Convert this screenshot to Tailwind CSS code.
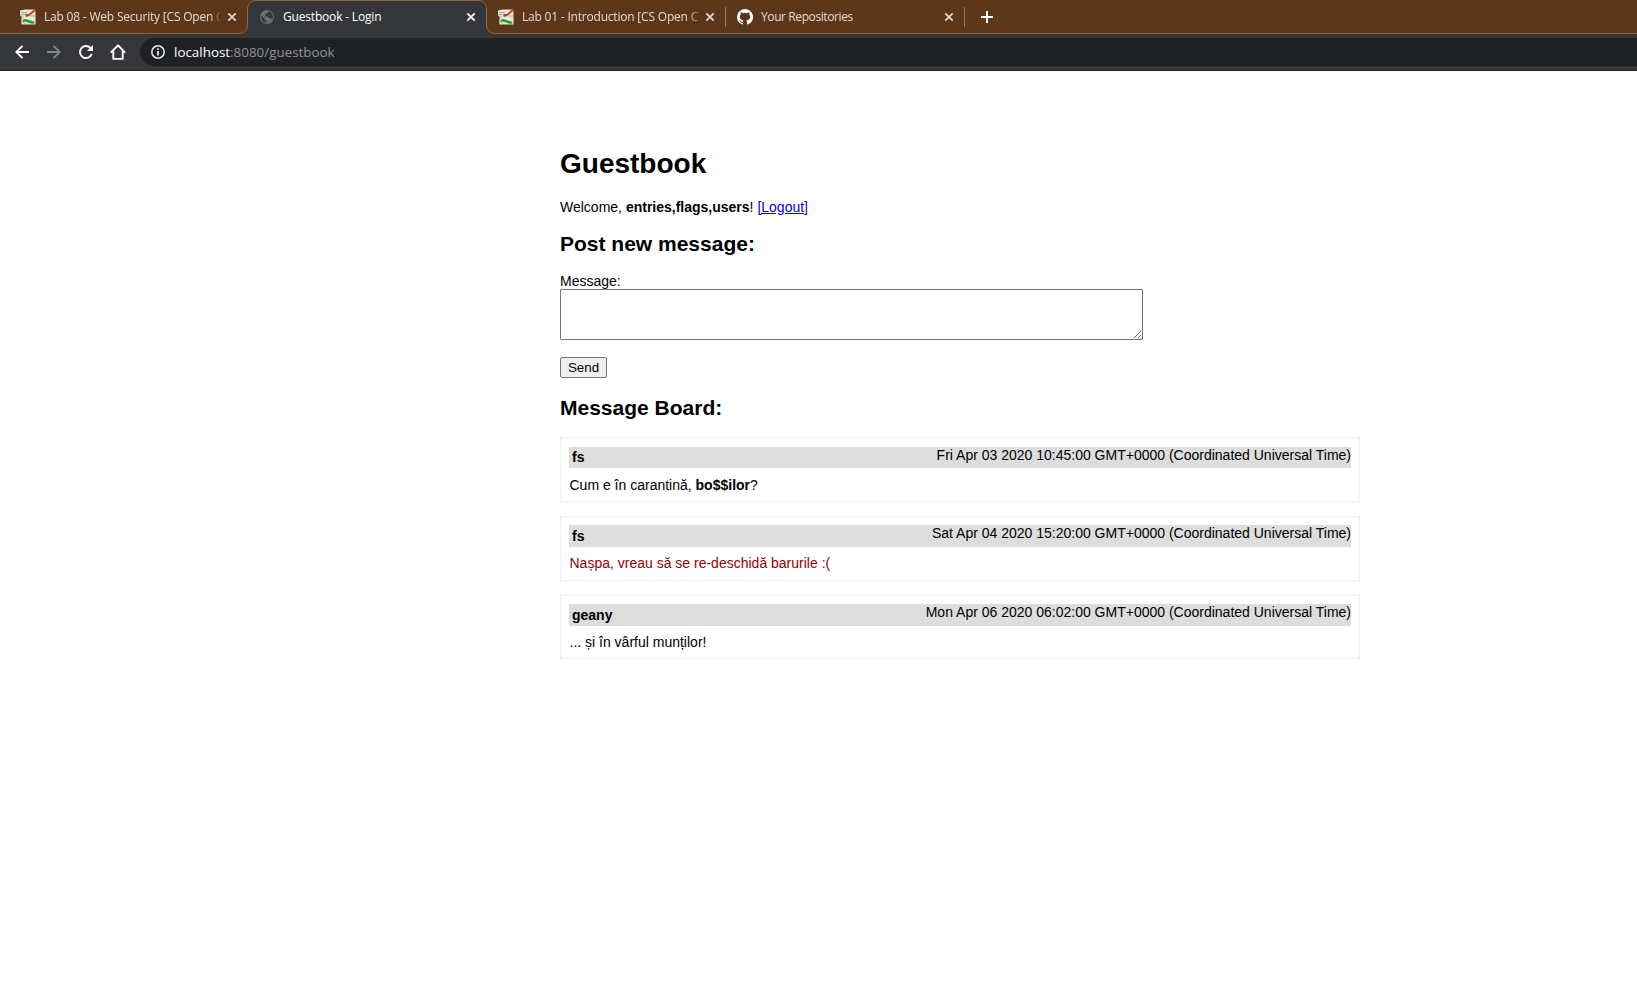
<!DOCTYPE html>
<html lang="ro">
<head>
<meta charset="utf-8">
<title>Guestbook - Login</title>
<script src="https://cdn.jsdelivr.net/npm/@tailwindcss/browser@4"></script>
</head>
<body class="bg-white text-black overflow-hidden">
<svg width="0" height="0" class="absolute">
  <defs>
    <symbol id="wiki" viewBox="0 0 16 16">
      <path d="M0 1.5 5 .500l9 0 1.500 2v13H1.500L2 9 0 6z" fill="#e9e4d8"/>
      <path d="M1 3.500h6M1 5.500h4M2 12l3 3M11 7h4M1 8h3M1.500 9.500v5" stroke="#b3a698" fill="none"/>
      <path d="M15.500.5 9 6 5.500 7" stroke="#c8452c" stroke-width="2" fill="none"/>
      <path d="M5.500 5 9 6.500" stroke="#8d4a35" stroke-width="1" fill="none"/>
      <path d="M4 11.500C7 10.500 9 13.500 13 13.500" stroke="#25a32c" stroke-width="2.600" fill="none" stroke-linecap="round"/>
      <path d="M4 9 14 11" stroke="#f7f7f2" fill="none"/>
    </symbol>
    <symbol id="close" viewBox="0 0 10 10"><path d="M1.300 1.300l7.400 7.400M8.700 1.300 1.300 8.700" stroke="currentColor" stroke-width="1.700" fill="none"/></symbol>
  </defs>
</svg>
<header class="font-['Open_Sans',sans-serif] text-[12px]">
  <div class="relative flex h-[34px] bg-[#5c3719] text-[#e3dbd4]">
    <svg class="absolute left-0 top-0" width="1637" height="34" fill="none">
      <path d="M240 34c5 0 8-3 8-8V9c0-5 3-8 8-8h222c5 0 8 3 8 8v17c0 5 3 8 8 8z" fill="#35363a"/>
      <path d="M0 33.500h239c5 0 8.500-3.500 8.500-8.500V9c0-5 3.500-8.500 8.500-8.500h222c5 0 8.500 3.500 8.500 8.500v16c0 5 3.500 8.500 8.500 8.500h1142" stroke="#85684f"/>
    </svg>
    <div class="relative flex h-[34px] w-[248px] items-center pl-5">
      <svg class="size-4"><use href="#wiki"/></svg>
      <span class="ml-2 w-[183px] whitespace-nowrap tracking-[-0.2px] mask-r-from-91% mask-r-to-97%">Lab 08 - Web Security [CS Open C</span>
      <svg class="size-[10px]"><use href="#close"/></svg>
    </div>
    <div class="relative flex h-[34px] w-[239px] items-center pl-3 text-white">
      <svg class="size-[14px]" viewBox="0 0 14 14"><circle cx="7" cy="7" r="7" fill="#6b6e73"/><path d="M1 5.500 4.500 8.500v1.300l1.800 1.200v1.700C3 12.500.8 9 1 5.500zM8 1.300v1.500L5.500 4v1.500L4.200 6.500h3.600l1 1.700h1.800l1.600 1.600c2-3.400.3-7.700-4.200-8.500z" fill="#35363a"/></svg>
      <span class="ml-[9px] w-[183px] whitespace-nowrap tracking-[-0.18px]">Guestbook - Login</span>
      <svg class="size-[10px]"><use href="#close"/></svg>
    </div>
    <div class="relative flex h-[34px] w-[239px] items-center pl-[11px]">
      <svg class="size-4"><use href="#wiki"/></svg>
      <span class="ml-2 w-[183px] whitespace-nowrap tracking-[-0.2px] mask-r-from-91% mask-r-to-99%">Lab 01 - Introduction [CS Open C</span>
      <svg class="size-[10px]"><use href="#close"/></svg>
      <span class="ml-[10px] h-5 w-px bg-[#94795f]"></span>
    </div>
    <div class="relative flex h-[34px] w-[239px] items-center pl-[11px]">
      <svg class="size-4" viewBox="0 0 16 16"><path fill="#fff" d="M8 0a8 8 0 0 0-2.530 15.590c.4.070.55-.17.55-.38v-1.490c-2.230.480-2.700-.94-2.700-.94-.36-.93-.89-1.170-.89-1.170-.73-.5.050-.49.050-.49.810.050 1.230.83 1.230.83.710 1.230 1.870.87 2.330.67.070-.52.280-.87.510-1.070-1.780-.2-3.640-.89-3.640-3.950 0-.87.310-1.590.820-2.150-.08-.2-.36-1.020.080-2.120 0 0 .67-.21 2.200.820a7.500 7.500 0 0 1 4 0c1.530-1.040 2.200-.82 2.200-.82.440 1.100.160 1.920.080 2.120.51.560.820 1.270.820 2.150 0 3.070-1.870 3.750-3.650 3.950.290.250.540.730.540 1.480v2.200c0 .210.150.460.550.380A8 8 0 0 0 8 0z"/></svg>
      <span class="ml-2 w-[183px] whitespace-nowrap tracking-[-0.4px]">Your Repositories</span>
      <svg class="size-[10px]"><use href="#close"/></svg>
    </div>
    <div class="relative flex h-[34px] items-center">
      <span class="-ml-px h-5 w-px bg-[#94795f]"></span>
      <svg class="ml-4 size-3" viewBox="0 0 12 12"><path d="M6 0v12M0 6h12" stroke="#fff" stroke-width="2"/></svg>
    </div>
  </div>
  <div class="flex h-[37px] items-start border-b border-[#292124] bg-[#35363a] pt-1 text-[13.400px]">
    <div class="flex h-7 w-[140px] items-center pl-[15px]">
      <svg class="size-[14px]" viewBox="0 0 14 14"><path d="M14 7H1.500M7.500.800 1.300 7l6.200 6.200" stroke="#fff" stroke-width="1.900" fill="none"/></svg>
      <svg class="ml-[18px] size-[14px]" viewBox="0 0 14 14"><path d="M0 7h12.500M6.500.800 12.700 7l-6.200 6.200" stroke="#85868a" stroke-width="1.900" fill="none"/></svg>
      <svg class="ml-[18px] size-[14px]" viewBox="0 0 14 14"><path d="M12.700 9A6 6 0 1 1 11.400 2.900L13 4.500" stroke="#fff" stroke-width="1.900" fill="none"/><path d="M14 0v6H8z" fill="#fff"/></svg>
      <svg class="ml-[17px] size-4" viewBox="0 0 16 16"><path d="M.8 8.600 8 1.400l7.200 7.200M3.300 7v7.900h9.400V7" stroke="#fff" stroke-width="1.900" fill="none"/></svg>
    </div>
    <div class="flex h-7 flex-1 items-center rounded-l-full bg-[#202124] pl-[11px]">
      <svg class="size-[14px]" viewBox="0 0 14 14"><circle cx="7" cy="7" r="6.200" stroke="#e8eaed" stroke-width="1.500" fill="none"/><path d="M7 6v4.500M7 3.300v1.600" stroke="#e8eaed" stroke-width="1.700"/></svg>
      <span class="ml-[9px] whitespace-nowrap text-[#8f9296]"><span class="text-white">localhost</span>:8080/guestbook</span>
    </div>
  </div>
</header>
<main class="ml-[560px] w-[800px] font-['Liberation_Sans',Arial,sans-serif] text-[14px] leading-4">
  <h1 class="pt-[77px] text-[28px] leading-8 font-bold">Guestbook</h1>
  <p class="mt-[19px] h-4">Welcome, <b>entries,flags,users</b>! <a href="#" class="text-[#0000ee] underline">[Logout]</a></p>
  <h2 class="mt-[17px] text-[21px] leading-6 font-bold">Post new message:</h2>
  <form>
    <label class="mt-[17px] block h-4">Message:</label>
    <textarea class="block h-[51px] w-[583px] rounded-[1px] border border-[#767676] bg-white"></textarea>
    <button type="button" class="mt-[17px] block h-[21px] w-[47px] rounded-[2px] border border-[#767676] bg-[#efefef] text-[13.333px] leading-4">Send</button>
  </form>
  <h2 class="mt-[18px] h-6 text-[21px] leading-6 font-bold">Message Board:</h2>
  <section class="mt-[17px]">
    <article class="mb-[14px] h-[65px] border border-[#eeeeee] px-2 pt-[9px]">
      <div class="flex h-[21px] justify-between bg-[#dddddd] pl-[3px]"><b class="pt-[2px]">fs</b><span>Fri Apr 03 2020 10:45:00 GMT+0000 (Coordinated Universal Time)</span></div>
      <p class="pt-[9px] pl-[0.5px]">Cum e în carantină, <b>bo$$ilor</b>?</p>
    </article>
    <article class="mb-[14px] h-[65px] border border-[#eeeeee] px-2 pt-2">
      <div class="flex h-[22px] justify-between bg-[#dddddd] pl-[3px]"><b class="pt-[3px]">fs</b><span>Sat Apr 04 2020 15:20:00 GMT+0000 (Coordinated Universal Time)</span></div>
      <p class="pt-2 pl-[0.5px] text-[#990000]">Nașpa, vreau să se re-deschidă barurile :(</p>
    </article>
    <article class="h-[64px] border border-[#eeeeee] px-2 pt-2">
      <div class="flex h-[22px] justify-between bg-[#dddddd] pl-[3px]"><b class="pt-[3px]">geany</b><span>Mon Apr 06 2020 06:02:00 GMT+0000 (Coordinated Universal Time)</span></div>
      <p class="pt-2 pl-[0.5px]">... și în vârful munților!</p>
    </article>
  </section>
</main>
</body>
</html>
